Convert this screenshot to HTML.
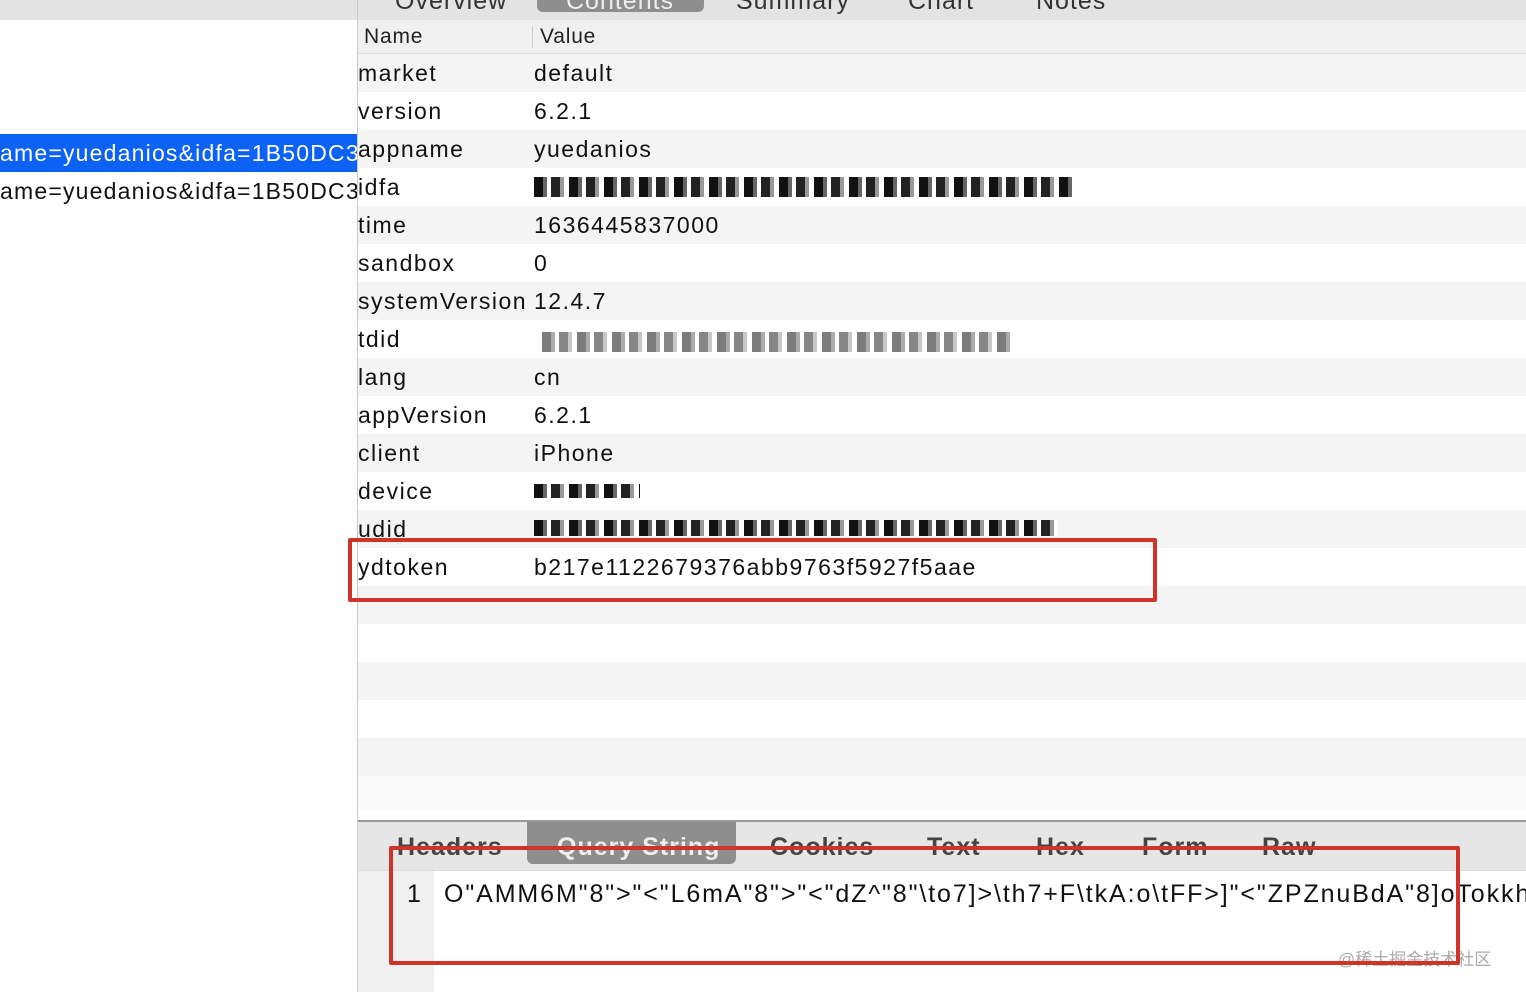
<html><head><style>
body{margin:0;width:1526px;height:992px;overflow:hidden;position:relative;font-family:"Liberation Sans",sans-serif;background:#fff;color:#111}
.a{position:absolute}
.row{position:absolute;left:358px;right:0;height:38px;font-size:23px;line-height:38px;letter-spacing:1.5px}
.row span{position:absolute;left:0}
.row b{font-weight:normal;position:absolute;left:176px}
.g{background:#f4f4f4}
.blur{position:absolute;top:9px;height:20px;background:repeating-linear-gradient(90deg,#111 0 9px,#666 9px 13px,#fff 13px 17px,#222 17px 26px,#999 26px 30px,#fff 30px 35px)}
.tab{position:absolute;font-size:25px;color:#444;letter-spacing:1px;font-weight:bold}
.tt{position:absolute;top:-13px;font-size:25px;color:#333;letter-spacing:1px}
</style></head><body>
<div class="a" style="left:0;top:0;width:1526px;height:20px;background:#e3e3e3;overflow:hidden">
<div class="a" style="left:537px;top:0;width:167px;height:12px;background:#8e8e8e;border-radius:0 0 6px 6px"></div>
<div class="tt" style="left:395px">Overview</div>
<div class="tt" style="left:566px;color:#eee">Contents</div>
<div class="tt" style="left:736px">Summary</div>
<div class="tt" style="left:908px">Chart</div>
<div class="tt" style="left:1036px">Notes</div>
</div>
<div class="a" style="left:0;top:20px;width:357px;height:972px;background:#fff"></div>
<div class="a" style="left:357px;top:0;width:1px;height:992px;background:#c8c8c8"></div>
<div class="a" style="left:0;top:134px;width:357px;height:38px;background:#0b62f5"></div>
<div class="a" style="left:0;top:134px;width:357px;height:38px;line-height:38px;font-size:23px;letter-spacing:1.2px;color:#fff;white-space:nowrap;overflow:hidden">ame=yuedanios&amp;idfa=1B50DC3</div>
<div class="a" style="left:0;top:172px;width:357px;height:38px;line-height:38px;font-size:23px;letter-spacing:1.2px;white-space:nowrap;overflow:hidden">ame=yuedanios&amp;idfa=1B50DC3</div>
<div class="a" style="left:358px;top:20px;right:0;height:33px;background:#f0f0f0;border-bottom:1px solid #ddd;font-size:21px;line-height:33px;color:#222;letter-spacing:.8px"><span style="position:absolute;left:6px">Name</span><span style="position:absolute;left:174px;top:6px;width:1px;height:22px;background:#ccc"></span><span style="position:absolute;left:182px">Value</span></div>
<div class="row g" style="top:54px"><span>market</span><b>default</b></div>
<div class="row" style="top:92px"><span>version</span><b>6.2.1</b></div>
<div class="row g" style="top:130px"><span>appname</span><b>yuedanios</b></div>
<div class="row" style="top:168px"><span>idfa</span><i class="blur" style="left:176px;width:542px"></i></div>
<div class="row g" style="top:206px"><span>time</span><b>1636445837000</b></div>
<div class="row" style="top:244px"><span>sandbox</span><b>0</b></div>
<div class="row g" style="top:282px"><span>systemVersion</span><b>12.4.7</b></div>
<div class="row" style="top:320px"><span>tdid</span><i class="blur" style="left:184px;width:468px;opacity:.55;top:12px"></i></div>
<div class="row g" style="top:358px"><span>lang</span><b>cn</b></div>
<div class="row" style="top:396px"><span>appVersion</span><b>6.2.1</b></div>
<div class="row g" style="top:434px"><span>client</span><b>iPhone</b></div>
<div class="row" style="top:472px"><span>device</span><i class="blur" style="left:176px;width:106px;height:14px;top:12px"></i></div>
<div class="row g" style="top:510px"><span>udid</span><i class="blur" style="left:176px;width:524px;height:16px;top:10px"></i></div>
<div class="row" style="top:548px"><span>ydtoken</span><b>b217e1122679376abb9763f5927f5aae</b></div>
<div class="row g" style="top:586px"></div>
<div class="row g" style="top:662px"></div>
<div class="row g" style="top:738px"></div>
<div class="row g" style="top:776px;height:34px;background:#fafafa"></div>
<div class="a" style="left:358px;top:820px;right:0;height:2px;background:#999"></div>
<div class="a" style="left:358px;top:822px;right:0;height:48px;background:#e6e6e6;border-bottom:1px solid #ddd"></div>
<div class="a" style="left:527px;top:822px;width:209px;height:42px;background:#8e8e8e;border-radius:0 0 6px 6px"></div>
<div class="tab" style="left:397px;top:833px">Headers</div>
<div class="tab" style="left:557px;top:833px;color:#eee">Query String</div>
<div class="tab" style="left:770px;top:833px">Cookies</div>
<div class="tab" style="left:927px;top:833px">Text</div>
<div class="tab" style="left:1036px;top:833px">Hex</div>
<div class="tab" style="left:1142px;top:833px">Form</div>
<div class="tab" style="left:1262px;top:833px">Raw</div>
<div class="a" style="left:358px;top:871px;width:76px;height:121px;background:#f0f0f0"></div>
<div class="a" style="left:407px;top:880px;font-size:25px">1</div>
<div class="a" style="left:444px;top:880px;font-size:25px;letter-spacing:1.9px;white-space:nowrap">O"AMM6M"8"&gt;"&lt;"L6mA"8"&gt;"&lt;"dZ^"8"\to7]&gt;\th7+F\tkA:o\tFF&gt;]"&lt;"ZPZnuBdA"8]oTokkh</div>
<div class="a" style="left:1338px;top:945px;font-size:17px;color:#aaa;font-family:'Liberation Sans','Noto Sans CJK SC',sans-serif">@稀土掘金技术社区</div>
<div class="a" style="left:348px;top:538px;width:801px;height:56px;border:4px solid #cf3428;border-radius:2px"></div>
<div class="a" style="left:389px;top:846px;width:1063px;height:111px;border:4px solid #cf3428;border-radius:2px"></div>
</body></html>
